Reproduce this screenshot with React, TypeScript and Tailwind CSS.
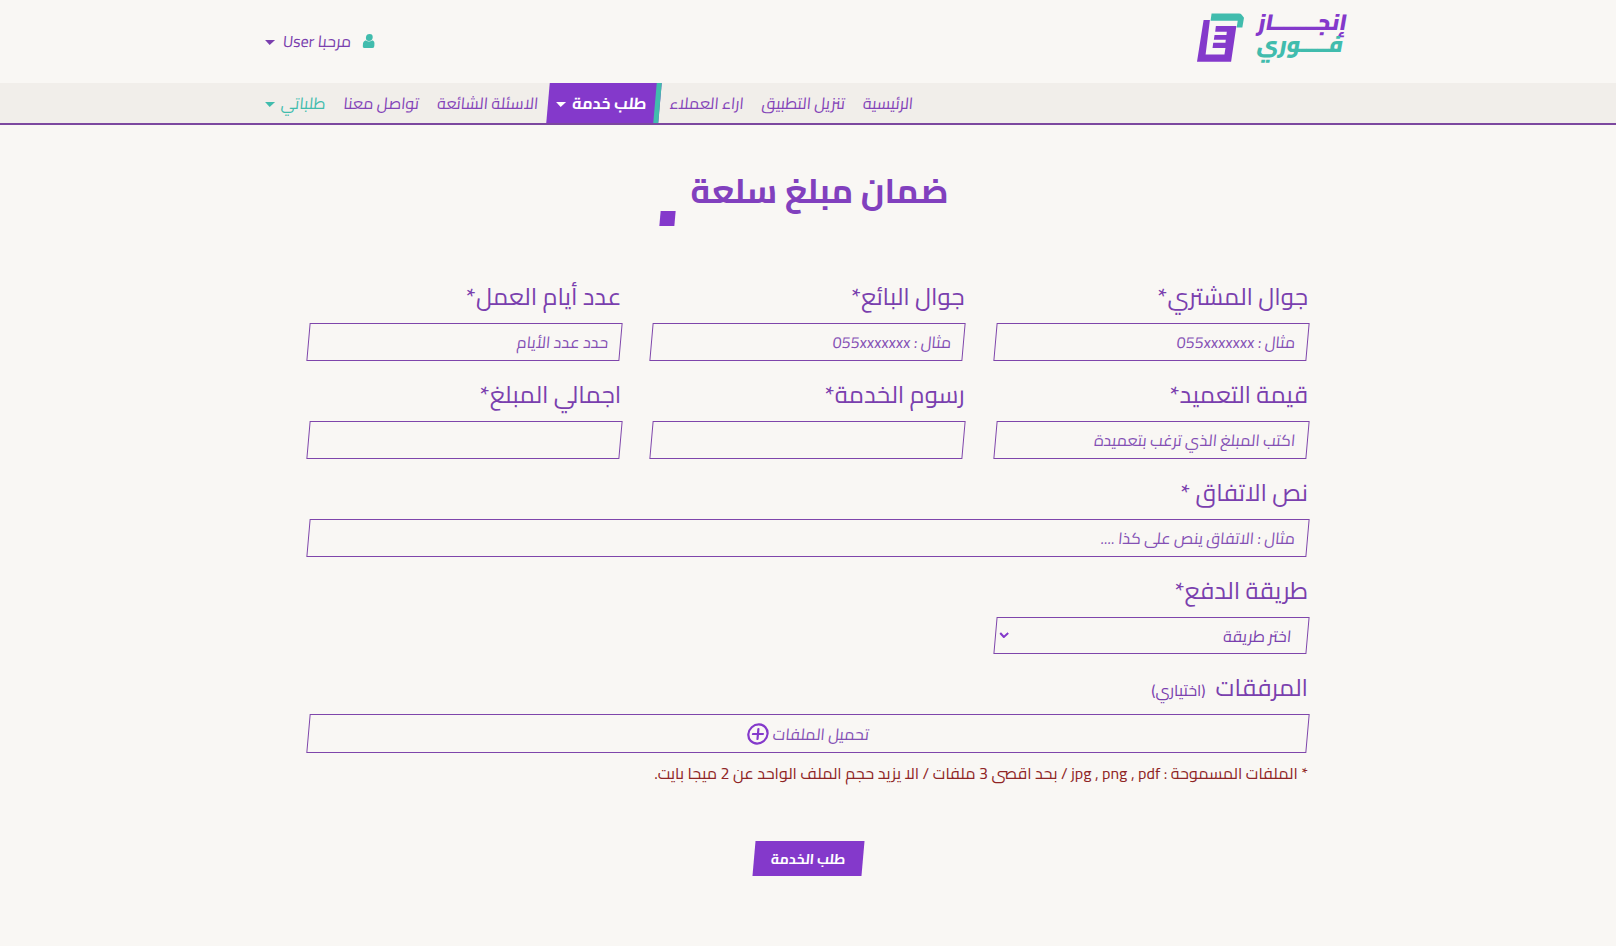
import type { ReactNode } from "react";

const inputClass =
  "block h-[38px] w-full -skew-x-5 border border-[#7f46ab] bg-transparent px-3 text-base font-normal text-[#7a3fae] placeholder:text-[#8450b4] focus:outline-none";

function Caret() {
  return (
    <svg className="mt-[2px] h-[5px] w-[10px] shrink-0 fill-current" viewBox="0 0 10 5" aria-hidden="true">
      <path d="M0 0H10L5 5Z" />
    </svg>
  );
}

function Logo() {
  return (
    <a href="#" aria-label="إنجاز فوري" className="flex items-start gap-3">
      <span className="flex -skew-x-10 flex-col items-start text-[22px] leading-[22px] font-black">
        <span className="text-[#8439cb]">إنجــــــــاز</span>
        <span className="text-[#41bcad]">فـــــوري</span>
      </span>
      <svg className="mt-[2px] h-[49px] w-[47px]" viewBox="51 37 142 147" aria-hidden="true">
        <path
          fill="#8439cb"
          d="M71 58H90L77 162H134L137 142H98L100 126H137L138 117H102L104 103H140L141 93H106L108 76H170L154 184H51Z"
        />
        <path fill="#41bcad" d="M95 38H178Q183 38 186 42L193 51 188 80H171L174 60H92Z" />
      </svg>
    </a>
  );
}

function NavLink({ children }: { children: ReactNode }) {
  return (
    <a href="#" className="px-2 py-2 text-[#8343b8]">
      {children}
    </a>
  );
}

function Field({ id, label, children }: { id: string; label: string; children: ReactNode }) {
  return (
    <div>
      <label htmlFor={id} className="mb-2 block text-2xl leading-9 font-normal">
        {label}
      </label>
      {children}
    </div>
  );
}

export default function App() {
  return (
    <div
      dir="rtl"
      className="min-h-screen bg-[#f9f7f4] pb-16 font-[Cairo,'DejaVu_Sans',sans-serif] text-base leading-6 text-[#7a3fae]"
    >
      <header>
        <div className="mx-auto flex h-[83px] max-w-[1110px] items-start justify-between pt-[11px] pr-[18px] pl-3">
          <Logo />
          <button type="button" className="mt-[18px] flex -skew-x-5 items-center font-normal">
            <svg className="ml-3 h-[14px] w-3 fill-[#41bcad]" viewBox="0 0 12 14" aria-hidden="true">
              <circle cx="6" cy="3.500" r="3.400" />
              <path d="M3 6.500Q6 8.600 9 6.500C11.400 6.500 12 9 12 11.800Q12 14 10 14H2Q0 14 0 11.800C0 9 .6 6.500 3 6.500Z" />
            </svg>
            <span className="ml-2">مرحبا User</span>
            <Caret />
          </button>
        </div>
        <nav className="border-b-2 border-[#7c489f] bg-[#f1eeea]">
          <div className="mx-auto flex max-w-[1110px] justify-end pl-1">
            <div className="flex -skew-x-5 gap-[2px] font-normal">
              <NavLink>الرئيسية</NavLink>
              <NavLink>تنزيل التطبيق</NavLink>
              <NavLink>اراء العملاء</NavLink>
              <button
                type="button"
                className="flex items-center gap-[6px] border-r-[5px] border-[#41bcad] bg-[#8439cb] px-2 font-bold text-white"
              >
                طلب خدمة
                <Caret />
              </button>
              <NavLink>الاسئلة الشائعة</NavLink>
              <NavLink>تواصل معنا</NavLink>
              <button type="button" className="flex items-center gap-[6px] px-2 text-[#41bcad]">
                طلباتي
                <Caret />
              </button>
            </div>
          </div>
        </nav>
      </header>

      <main className="mx-auto max-w-[1000px]">
        <div className="flex items-end justify-center gap-4 pt-9 pr-2 pb-[53px]">
          <h1 className="pb-[5px] text-[34px] leading-[60px] font-bold text-[#8140be]">ضمان مبلغ سلعة</h1>
          <span className="size-[15px] -skew-x-5 bg-[#8439cb]" />
        </div>

        <form className="flex flex-col gap-4" onSubmit={(e) => e.preventDefault()}>
          <div className="grid grid-cols-3 gap-x-[30px] gap-y-4">
            <Field id="buyer" label="جوال المشتري*">
              <input id="buyer" className={inputClass} placeholder="مثال : 055xxxxxxx" />
            </Field>
            <Field id="seller" label="جوال البائع*">
              <input id="seller" className={inputClass} placeholder="مثال : 055xxxxxxx" />
            </Field>
            <Field id="days" label="عدد أيام العمل*">
              <input id="days" className={inputClass} placeholder="حدد عدد الأيام" />
            </Field>
            <Field id="amount" label="قيمة التعميد*">
              <input id="amount" className={inputClass} placeholder="اكتب المبلغ الذي ترغب بتعميدة" />
            </Field>
            <Field id="fees" label="رسوم الخدمة*">
              <input id="fees" className={inputClass} />
            </Field>
            <Field id="total" label="اجمالي المبلغ*">
              <input id="total" className={inputClass} />
            </Field>
          </div>

          <Field id="agreement" label="نص الاتفاق *">
            <input id="agreement" className={inputClass} placeholder="مثال : الاتفاق ينص على كذا ...." />
          </Field>

          <div className="grid grid-cols-3 gap-x-[30px]">
            <Field id="payment" label="طريقة الدفع*">
              <div className="relative -skew-x-5">
                <select
                  id="payment"
                  className="block h-[37px] w-full appearance-none border border-[#7f46ab] bg-transparent px-4 text-base leading-6 font-normal focus:outline-none"
                >
                  <option>اختر طريقة</option>
                </select>
                <svg
                  className="pointer-events-none absolute top-[15px] left-[4px] h-[6px] w-[10px] fill-none stroke-[#8439cb] stroke-2"
                  viewBox="0 0 10 6"
                  aria-hidden="true"
                >
                  <path d="M1 1L5 5L9 1" />
                </svg>
              </div>
            </Field>
          </div>

          <div>
            <p className="mb-2 flex items-baseline gap-[10px] text-2xl leading-9 font-normal">
              المرفقات <span className="text-base leading-6">(اختياري)</span>
            </p>
            <button
              type="button"
              className="flex h-[39px] w-full -skew-x-5 items-center justify-center gap-1 border border-[#7f46ab] font-normal text-[#8450b4]"
            >
              تحميل الملفات
              <svg className="size-[22px] fill-none stroke-[#8439cb]" viewBox="0 0 22 22" aria-hidden="true">
                <circle cx="11" cy="11" r="9.600" strokeWidth="2.200" />
                <path d="M11 6V16M6 11H16" strokeWidth="2.200" strokeLinecap="round" />
              </svg>
            </button>
            <p className="mt-2 font-normal text-[#8f2525]">
              * الملفات المسموحة : jpg , png , pdf / بحد اقصى 3 ملفات / الا يزيد حجم الملف الواحد عن 2 ميجا بايت.
            </p>
          </div>

          <button
            type="submit"
            className="mt-10 h-[35px] -skew-x-5 self-center bg-[#8439cb] px-[17px] text-sm font-bold text-white"
          >
            طلب الخدمة
          </button>
        </form>
      </main>
    </div>
  );
}
